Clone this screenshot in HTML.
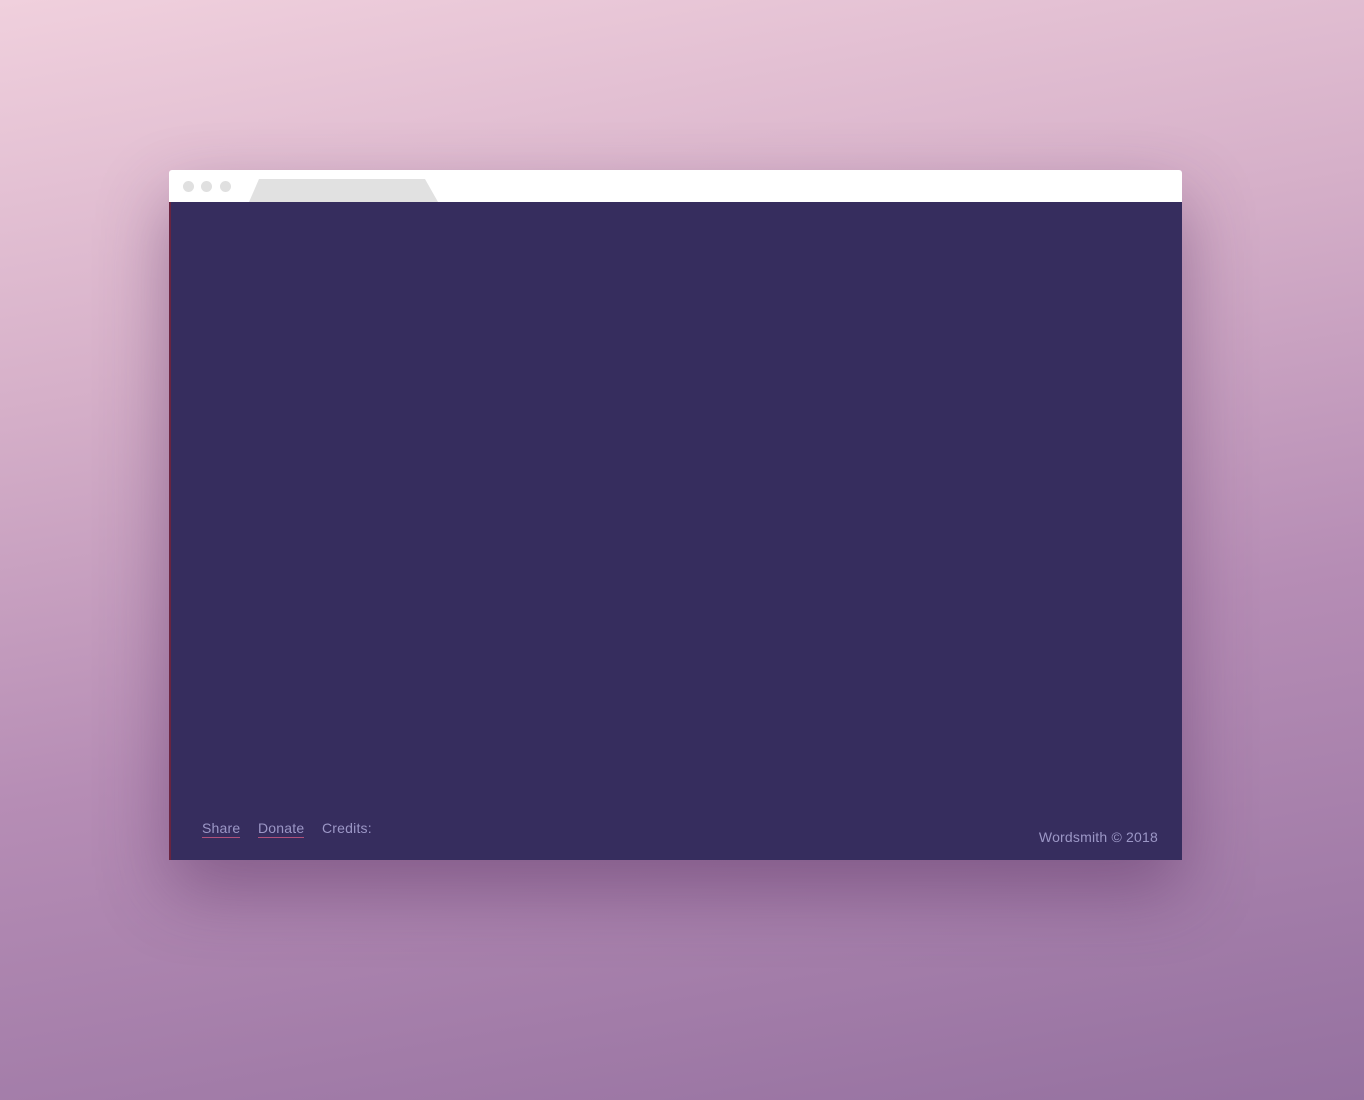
<!DOCTYPE html>
<html><head><style>
body{margin:0;width:1364px;height:1100px;overflow:hidden;background:linear-gradient(170deg,#f0d0dd 0%,#d6b0c9 30%,#b68db5 60%,#9571a0 100%);font-family:"Liberation Sans",sans-serif;position:relative}
.win{position:absolute;left:169px;top:170px;width:1013px;height:690px;box-shadow:0 30px 70px rgba(80,40,90,.45);border-radius:3px 3px 0 0}
.bar{height:32px;background:#fff;border-radius:3px 3px 0 0;position:relative}
.dot{position:absolute;top:11px;width:11px;height:11px;border-radius:50%;background:#e0e0e0}
.content{position:absolute;top:32px;left:0;right:0;bottom:0;background:#362d5e;border-left:2px solid #6a2440}
.l{position:absolute;top:618px;font-size:14px;color:#9c97c6;letter-spacing:0.2px}
.u{border-bottom:1px solid #b0507a;padding-bottom:1px}
</style></head><body>
<div class="win">
<div class="bar">
<div class="dot" style="left:14px"></div><div class="dot" style="left:32px"></div><div class="dot" style="left:51px"></div>
<svg style="position:absolute;left:80px;top:9px" width="190" height="23"><polygon points="10,0 176,0 189,23 0,23" fill="#e1e1e1"/></svg>
</div>
<div class="content">
<span class="l u" style="left:31px">Share</span>
<span class="l u" style="left:87px">Donate</span>
<span class="l" style="left:151px">Credits:</span>
<span class="l" style="right:24px;top:627px">Wordsmith © 2018</span>
</div>
</div>
</body></html>
